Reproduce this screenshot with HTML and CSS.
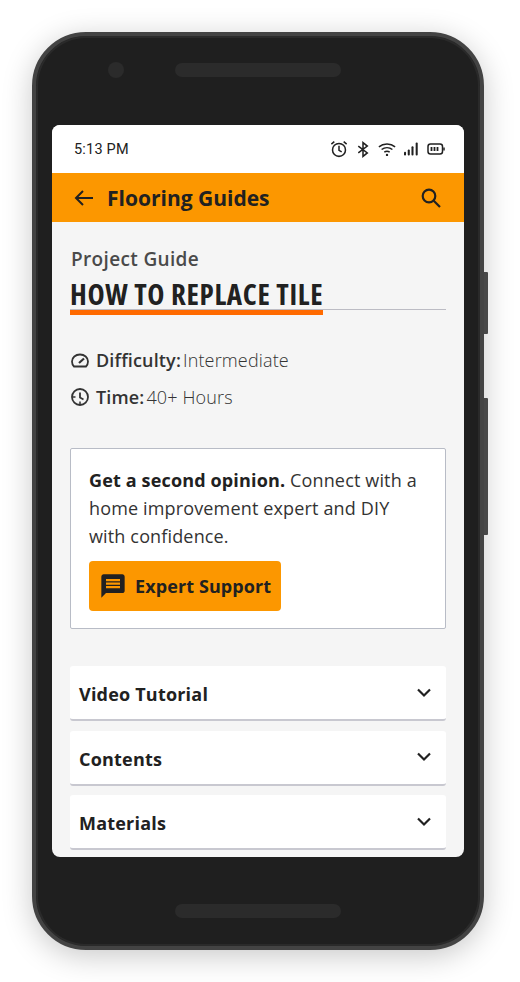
FILE: index.html
```html
<!DOCTYPE html>
<html lang="en">
<head>
    <meta charset="UTF-8">
    <meta name="viewport" content="width=device-width, initial-scale=1.0">
    <title>Flooring Guides</title>
    <link rel="stylesheet" href="styles.css">
</head>
<body>
    <div class="phone">
        <span class="side-btn side-btn-power"></span>
        <span class="side-btn side-btn-volume"></span>

        <!-- Top bezel -->
        <div class="bezel-top">
            <span class="camera"></span>
            <span class="speaker"></span>
        </div>

        <div class="screen">
            <!-- Status bar -->
            <div class="status-bar">
                <span class="status-time">5:13 PM</span>
                <div class="status-icons">
                    <svg class="icon-alarm" width="18" height="18" viewBox="0 0 20 20" fill="none" stroke="#212121" stroke-width="1.700">
                        <circle cx="10" cy="11" r="7.200"/>
                        <path d="M10 6.500V11.500L13 13.200"/>
                        <path d="M1.500 4.500L4.800 1.800M18.500 4.500L15.200 1.800"/>
                    </svg>
                    <svg class="icon-bt" width="12" height="17" viewBox="0 0 14 18" fill="none" stroke="#212121" stroke-width="1.800">
                        <path d="M1.500 5L12 13L7 17V1L12 5L1.500 13"/>
                    </svg>
                    <svg class="icon-wifi" width="18" height="15" viewBox="0 0 20 16" fill="none" stroke="#212121" stroke-width="1.700">
                        <path d="M1 5C6 1 14 1 19 5"/>
                        <path d="M4 8C7.500 5.300 12.500 5.300 16 8"/>
                        <path d="M7 11C8.800 9.700 11.200 9.700 13 11"/>
                        <circle cx="10" cy="14" r="1.300" fill="#212121" stroke="none"/>
                    </svg>
                    <svg class="icon-signal" width="14" height="14" viewBox="0 0 15 14" fill="#212121">
                        <rect x="0" y="10" width="2.200" height="4" rx="1"/>
                        <rect x="4" y="7.500" width="2.200" height="6.500" rx="1"/>
                        <rect x="8" y="4" width="2.200" height="10" rx="1"/>
                        <rect x="12.500" y="0" width="2.200" height="14" rx="1"/>
                    </svg>
                    <svg class="icon-batt" width="18" height="12" viewBox="0 0 18 12" fill="none" stroke="#212121" stroke-width="1.500">
                        <rect x="1" y="1" width="14.500" height="10" rx="2.500"/>
                        <path d="M4.500 4V8M7.500 4V8M10.500 4V8" stroke-width="1.800"/>
                        <path d="M17 4.500V7.500"/>
                    </svg>
                </div>
            </div>

            <!-- App bar -->
            <div class="app-bar">
                <svg class="back-icon" width="24" height="24" viewBox="0 0 24 24" fill="none" stroke="#212121" stroke-width="2">
                    <path d="M21 12H4M11 5L4 12L11 19"/>
                </svg>
                <h1 class="app-title">Flooring Guides</h1>
                <svg class="search-icon" width="24" height="24" viewBox="0 0 24 24" fill="none" stroke="#212121" stroke-width="2.200">
                    <circle cx="10" cy="10" r="6.300"/>
                    <path d="M14.500 14.500L21 21"/>
                </svg>
            </div>

            <div class="content">
                <p class="eyebrow">Project Guide</p>
                <div class="title-rule">
                    <h2 class="guide-title">HOW TO REPLACE TILE</h2>
                </div>

                <div class="meta">
                    <div class="meta-row">
                        <svg width="20" height="20" viewBox="0 0 20 20" fill="none" stroke="#333" stroke-width="1.800">
                            <path d="M4 16.500H16C17.300 15.200 18 13.500 18 11.500C18 7.500 14.500 4.500 10 4.500C5.500 4.500 2 7.500 2 11.500C2 13.500 2.700 15.200 4 16.500Z"/>
                            <path d="M9 13L14 8.500" stroke-width="2.200"/>
                        </svg>
                        <strong class="meta-label">Difficulty:</strong>
                        <span class="meta-value">Intermediate</span>
                    </div>
                    <div class="meta-row">
                        <svg width="20" height="20" viewBox="0 0 20 20" fill="none" stroke="#333" stroke-width="1.800">
                            <circle cx="10" cy="10" r="8"/>
                            <path d="M10 5.500V10.500L13.500 12.500"/>
                            <path d="M10 14.500V17M3 10H5.500" stroke-width="1.500"/>
                        </svg>
                        <strong class="meta-label">Time:</strong>
                        <span class="meta-value">40+ Hours</span>
                    </div>
                </div>

                <div class="promo">
                    <p class="promo-text"><strong>Get a second opinion.</strong> Connect with a home improvement expert and DIY with confidence.</p>
                    <a class="promo-btn" href="#">
                        <svg width="28" height="28" viewBox="0 0 24 24" fill="#212121">
                            <path d="M20 2H4C2.900 2 2.010 2.900 2.010 4L2 22L6 18H20C21.100 18 22 17.100 22 16V4C22 2.900 21.100 2 20 2ZM18 14H6V12H18V14ZM18 11H6V9H18V11ZM18 8H6V6H18V8Z"/>
                        </svg>
                        Expert Support
                    </a>
                </div>

                <div class="accordion">
                    <div class="acc-item">
                        <span>Video Tutorial</span>
                        <svg width="18" height="12" viewBox="0 0 18 12" fill="none" stroke="#212121" stroke-width="2.200"><path d="M3 2.500L9 8.500L15 2.500"/></svg>
                    </div>
                    <div class="acc-item">
                        <span>Contents</span>
                        <svg width="18" height="12" viewBox="0 0 18 12" fill="none" stroke="#212121" stroke-width="2.200"><path d="M3 2.500L9 8.500L15 2.500"/></svg>
                    </div>
                    <div class="acc-item">
                        <span>Materials</span>
                        <svg width="18" height="12" viewBox="0 0 18 12" fill="none" stroke="#212121" stroke-width="2.200"><path d="M3 2.500L9 8.500L15 2.500"/></svg>
                    </div>
                </div>
            </div>
        </div>

        <!-- Bottom bezel -->
        <div class="bezel-bottom">
            <span class="speaker"></span>
        </div>
    </div>
</body>
</html>
```

FILE: styles.css
```css
* {
    box-sizing: border-box;
    margin: 0;
    padding: 0;
}
body {
    background-color: #fff;
    font-family: 'Open Sans', sans-serif;
    color: #212121;
    height: 982px;
    overflow: hidden;
    padding: 32px 0 0 32px;
}
.phone {
    position: relative;
    width: 452px;
    height: 918px;
    padding: 0 16px;
    background-color: #1f1f1f;
    border: 4px solid #434343;
    border-radius: 54px;
    box-shadow: inset 0 0 0 2px #2a2a2a, 0 6px 30px rgba(0, 0, 0, 0.22);
}
.side-btn {
    position: absolute;
    right: -8px;
    width: 4px;
    background-color: #474747;
    border-radius: 0 1px 1px 0;
}
.side-btn-power {
    top: 236px;
    height: 62px;
}
.side-btn-volume {
    top: 362px;
    height: 137px;
}
.bezel-top {
    display: flex;
    align-items: center;
    height: 89px;
    padding: 0 0 22px 56px;
}
.camera {
    width: 16px;
    height: 16px;
    border-radius: 50%;
    background-color: #2b2b2b;
    margin-right: 51px;
}
.speaker {
    display: block;
    width: 166px;
    height: 14px;
    border-radius: 7px;
    background-color: #2b2b2b;
}
.bezel-bottom {
    display: flex;
    justify-content: center;
    padding-top: 47px;
}
.screen {
    height: 732px;
    background-color: #f5f5f5;
    border-radius: 8px;
    overflow: hidden;
}
.status-bar {
    display: flex;
    align-items: center;
    justify-content: space-between;
    height: 48px;
    padding: 0 19px 0 22px;
    background-color: #fff;
}
.status-time {
    font-family: 'Roboto', sans-serif;
    font-size: 14.500px;
    color: #212121;
    letter-spacing: 0.2px;
}
.status-icons {
    display: flex;
    align-items: center;
    gap: 9px;
}
.icon-signal {
    margin-left: -1px;
}
.app-bar {
    display: flex;
    align-items: center;
    height: 49px;
    padding: 0 21px 0 20px;
    background-color: #fc9700;
}
.back-icon {
    margin-right: 11px;
}
.app-title {
    flex: 1;
    font-size: 21px;
    font-weight: 700;
}
.content {
    padding: 23px 18px 0 18px;
}
.eyebrow {
    font-size: 19px;
    font-weight: 600;
    line-height: 28px;
    letter-spacing: 0.35px;
    color: #4a4a4a;
    padding-left: 1px;
}
.title-rule {
    border-bottom: 1px solid #bcbcc4;
    height: 37px;
}
.guide-title {
    display: inline-block;
    height: 42px;
    width: 253px;
    border-bottom: 5px solid #ff6a00;
    font-size: 29px;
    font-stretch: 75%;
    line-height: 42px;
    letter-spacing: 0.65px;
    font-weight: 700;
    white-space: nowrap;
    overflow: hidden;
}
.meta {
    margin-top: 36px;
    display: flex;
    flex-direction: column;
    gap: 9px;
}
.meta-row {
    display: flex;
    align-items: center;
    height: 28px;
    font-size: 18px;
    letter-spacing: 0.15px;
    color: #333;
}
.meta-label {
    margin-left: 6px;
    font-weight: 600;
    margin-right: 2px;
}
.meta-value {
    font-weight: 300;
}
.promo {
    margin-top: 37px;
    height: 181px;
    padding: 17px 18px;
    background-color: #fff;
    border: 1px solid #b8bcc6;
    border-radius: 2px;
}
.promo-text {
    font-size: 18px;
    line-height: 28px;
    letter-spacing: 0.15px;
    color: #333;
}
.promo-text strong {
    color: #212121;
}
.promo-btn {
    display: flex;
    align-items: center;
    gap: 8px;
    width: 192px;
    height: 50px;
    margin-top: 11px;
    padding-left: 10px;
    background-color: #fc9700;
    border-radius: 4px;
    color: #212121;
    font-size: 18px;
    font-weight: 700;
    letter-spacing: 0.1px;
    text-decoration: none;
}
.accordion {
    margin-top: 37px;
    display: flex;
    flex-direction: column;
    gap: 9.500px;
}
.acc-item {
    display: flex;
    align-items: center;
    justify-content: space-between;
    height: 55px;
    padding: 3px 13px 0 9px;
    background-color: #fff;
    border-bottom: 2px solid #c8c8d0;
    border-radius: 3px;
    font-size: 18px;
    font-weight: 700;
    letter-spacing: 0.2px;
}
.acc-item svg {
    margin-bottom: 3px;
}
```
